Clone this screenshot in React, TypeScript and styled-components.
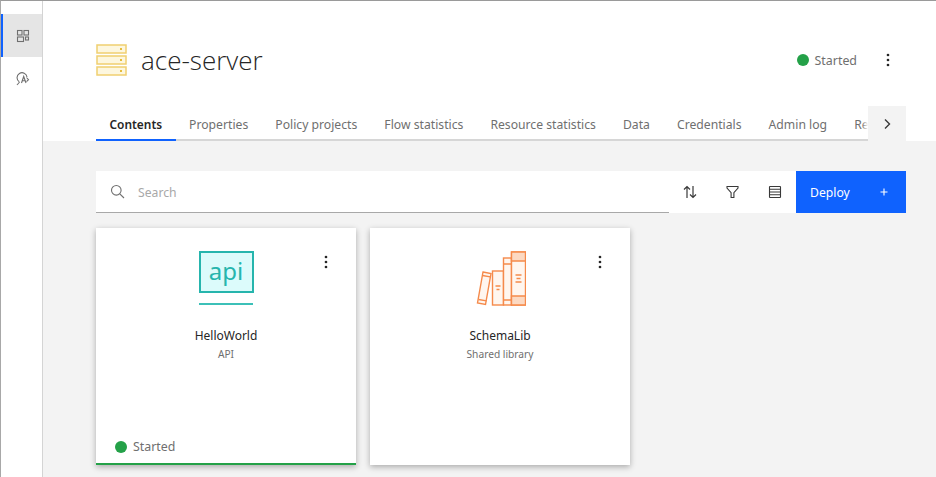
import styled, { createGlobalStyle } from 'styled-components'

const Global = createGlobalStyle`
html, body {
    margin: 0;
    padding: 0;
    height: 100%;
    overflow: hidden;
    background: #f3f3f3;
    font-family: "Noto Sans", "Liberation Sans", sans-serif;
}
`;

const Shell = styled.div`
    display: flex;
    width: 936px;
    height: 477px;
    box-sizing: border-box;
    border-top: 1px solid #9a9a9a;
    border-left: 1px solid #a8a8a8;
    overflow: hidden;
`;

const Sidebar = styled.nav`
    width: 41px;
    flex-shrink: 0;
    background: #fff;
    border-right: 1px solid #d4d4d4;
    padding-top: 13px;
    display: flex;
    flex-direction: column;
`;

const SideItem = styled.div<{ active?: boolean }>`
    height: 43px;
    display: flex;
    align-items: center;
    justify-content: center;
    box-sizing: border-box;
    background: ${({ active }) => active ? '#e5e5e5' : '#fff'};
    border-left: 2px solid ${({ active }) => active ? '#0f62fe' : 'transparent'};
    color: #6f6f6f;
`;

const Main = styled.main`
    flex: 1;
    min-width: 0;
    display: flex;
    flex-direction: column;
`;

const Header = styled.header`
    background: #fff;
    height: 140px;
    box-sizing: border-box;
    padding: 41px 30px 0 53px;
    display: flex;
    flex-direction: column;
`;

const TitleRow = styled.div`
    display: flex;
    align-items: center;
    height: 36px;
`;

const Title = styled.h1`
    margin: 0 0 0 13px;
    font-family: "Open Sans", "Noto Sans", sans-serif;
    font-size: 26px;
    font-weight: 300;
    color: #262626;
    flex: 1;
`;

const Status = styled.div`
    display: flex;
    align-items: center;
    gap: 6px;
    font-size: 12.4px;
    color: #6f6f6f;
`;

const Dot = styled.span`
    width: 12px;
    height: 12px;
    border-radius: 50%;
    background: #24a148;
`;

const HeaderMenu = styled.div`
    margin-left: 23px;
    margin-right: 10px;
    display: flex;
`;

const TabBar = styled.div`
    position: relative;
    margin-top: 29px;
    height: 35px;
`;

const TabList = styled.div`
    display: flex;
    width: 772px;
    height: 32px;
    border-bottom: 2px solid #d6d6d6;
`;

const Tab = styled.div<{ active?: boolean }>`
    flex-shrink: 0;
    padding: 2px 13.5px 0;
    height: 34px;
    box-sizing: border-box;
    display: flex;
    align-items: center;
    font-size: ${({ active }) => active ? '11.9px' : '12.2px'};
    font-weight: ${({ active }) => active ? 600 : 400};
    color: ${({ active }) => active ? '#262626' : '#6f6f6f'};
    border-bottom: 2px solid ${({ active }) => active ? '#0f62fe' : 'transparent'};
`;

const ScrollButton = styled.div`
    position: absolute;
    right: 0;
    top: -1px;
    width: 38px;
    height: 35px;
    background: #f3f3f3;
    display: flex;
    align-items: center;
    justify-content: center;
    color: #393939;

    &::before {
        content: '';
        position: absolute;
        left: -6px;
        top: 0;
        width: 6px;
        height: 33px;
        background: linear-gradient(to right, rgba(255, 255, 255, 0), #fff);
    }
`;

const Content = styled.div`
    padding: 30px 30px 0 53px;
`;

const Toolbar = styled.div`
    display: flex;
    height: 42px;
    background: #fff;
`;

const SearchBox = styled.div`
    flex: 1;
    display: flex;
    align-items: center;
    gap: 13px;
    padding-left: 14px;
    border-bottom: 1px solid #a8a8a8;
    color: #6f6f6f;
`;

const Placeholder = styled.span`
    font-size: 12.2px;
    padding-top: 2px;
    color: #a8a8a8;
`;

const ToolIcon = styled.div`
    width: 42.5px;
    display: flex;
    align-items: center;
    justify-content: center;
    color: #393939;
`;

const Deploy = styled.button`
    width: 110px;
    border: 0;
    background: #0f62fe;
    color: #fff;
    font-family: inherit;
    font-size: 12.2px;
    display: flex;
    align-items: center;
    justify-content: space-between;
    padding: 0 17px 0 14px;
`;

const Cards = styled.div`
    display: flex;
    gap: 14px;
    margin-top: 15px;
`;

const Card = styled.article<{ accent?: boolean }>`
    position: relative;
    width: 260px;
    height: 237px;
    box-sizing: border-box;
    background: #fff;
    box-shadow: 0 2px 6px rgba(0, 0, 0, 0.3);
    border-bottom: 2px solid ${({ accent }) => accent ? '#24a148' : 'transparent'};
    display: flex;
    flex-direction: column;
    align-items: center;
    padding-top: 22px;
`;

const CardMenu = styled.div`
    position: absolute;
    top: 26px;
    right: 22px;
    display: flex;
`;

const CardIcon = styled.div`
    height: 57px;
    display: flex;
    align-items: center;
    justify-content: center;
`;

const ApiBox = styled.div`
    width: 55px;
    height: 42px;
    box-sizing: border-box;
    border: 2px solid #26b5ad;
    background: #dcfbfb;
    color: #26b5ad;
    font-size: 24px;
    line-height: 35px;
    text-align: center;
`;

const ApiWrap = styled.div`
    display: flex;
    flex-direction: column;
    gap: 10px;
    margin-bottom: 2px;
`;

const ApiLine = styled.div`
    height: 2px;
    background: #3cc0b8;
    width: 54px;
`;

const CardName = styled.div`
    margin-top: 20px;
    font-size: 12px;
    color: #262626;
`;

const CardType = styled.div`
    margin-top: 3px;
    font-size: 10.2px;
    color: #6f6f6f;
`;

const CardStatus = styled(Status)`
    position: absolute;
    left: 19px;
    bottom: 8px;
`;

const Kebab = () => (
    <svg width="16" height="16" viewBox="0 0 16 16" fill="#262626">
        <circle cx="8" cy="3" r="1.35" />
        <circle cx="8" cy="8" r="1.35" />
        <circle cx="8" cy="13" r="1.35" />
    </svg>
);

const tabs = ['Contents', 'Properties', 'Policy projects', 'Flow statistics', 'Resource statistics', 'Data', 'Credentials', 'Admin log', 'Res'];

export default function App() {
    return (
        <>
            <Global />
            <Shell>
                <Sidebar>
                    <SideItem active>
                        <svg width="14" height="14" viewBox="0 0 14 14" fill="none" stroke="currentColor" strokeWidth="1.1">
                            <rect x="1.5" y="1.5" width="4.5" height="4.5" />
                            <rect x="8" y="1.5" width="4.5" height="4.5" />
                            <rect x="1.5" y="8" width="6" height="4.5" />
                            <rect x="9.5" y="8" width="3" height="3" />
                        </svg>
                    </SideItem>
                    <SideItem>
                        <svg width="14" height="14" viewBox="0 0 14 14" fill="none" stroke="currentColor" strokeWidth="1.1">
                            <path d="M3.2 9.8A5 5 0 1 1 11 5" />
                            <path d="M1 13l2.6-3" />
                            <path d="M5.5 11l2.2-6.5L10 11M6.4 8.8h2.6" />
                            <path d="M10.5 5.5l2 2.2-2 2" />
                        </svg>
                    </SideItem>
                </Sidebar>
                <Main>
                    <Header>
                        <TitleRow>
                            <svg width="32" height="32" viewBox="0 0 32 32" fill="#fdf7df" stroke="#f0cf70" strokeWidth="1.5">
                                <rect x="1" y="1" width="29" height="8" />
                                <rect x="1" y="12" width="29" height="8" />
                                <rect x="1" y="23" width="29" height="8" />
                                <rect x="24" y="4" width="2" height="2" fill="#e6bc3c" stroke="none" />
                                <rect x="24" y="15" width="2" height="2" fill="#e6bc3c" stroke="none" />
                                <rect x="24" y="26" width="2" height="2" fill="#e6bc3c" stroke="none" />
                            </svg>
                            <Title>ace-server</Title>
                            <Status><Dot />Started</Status>
                            <HeaderMenu><Kebab /></HeaderMenu>
                        </TitleRow>
                        <TabBar>
                            <TabList>
                                {tabs.map((t, i) => <Tab key={t} active={i === 0}>{t}</Tab>)}
                            </TabList>
                            <ScrollButton>
                                <svg width="14" height="14" viewBox="0 0 14 14" fill="none" stroke="currentColor" strokeWidth="1.4">
                                    <path d="M5 2.5L9.5 7 5 11.5" />
                                </svg>
                            </ScrollButton>
                        </TabBar>
                    </Header>
                    <Content>
                        <Toolbar>
                            <SearchBox>
                                <svg width="15" height="15" viewBox="0 0 15 15" fill="none" stroke="currentColor" strokeWidth="1.1">
                                    <circle cx="6.3" cy="6.3" r="4.8" />
                                    <path d="M9.8 9.8L14 14" />
                                </svg>
                                <Placeholder>Search</Placeholder>
                            </SearchBox>
                            <ToolIcon>
                                <svg width="14" height="14" viewBox="0 0 14 14" fill="none" stroke="currentColor" strokeWidth="1.2">
                                    <path d="M4 13V1.5M1 4.5l3-3 3 3" />
                                    <path d="M10 1v11.5M7 9.5l3 3 3-3" />
                                </svg>
                            </ToolIcon>
                            <ToolIcon>
                                <svg width="14" height="14" viewBox="0 0 14 14" fill="none" stroke="currentColor" strokeWidth="1.1">
                                    <path d="M2 1.5h11v1.6L8.9 7.6v4.9H6.1V7.6L2 3.1z" />
                                </svg>
                            </ToolIcon>
                            <ToolIcon>
                                <svg width="14" height="14" viewBox="0 0 14 14" fill="none" stroke="currentColor" strokeWidth="1.1">
                                    <rect x="1.5" y="1.5" width="11" height="11" rx="0.5" />
                                    <path d="M1.5 4.3h11M1.5 7h11M1.5 9.7h11" />
                                </svg>
                            </ToolIcon>
                            <Deploy>
                                <span>Deploy</span>
                                <svg width="10" height="10" viewBox="0 0 10 10" stroke="currentColor" strokeWidth="1.1">
                                    <path d="M5 1.5v7M1.5 5h7" />
                                </svg>
                            </Deploy>
                        </Toolbar>
                        <Cards>
                            <Card accent>
                                <CardMenu><Kebab /></CardMenu>
                                <CardIcon>
                                    <ApiWrap>
                                        <ApiBox>api</ApiBox>
                                        <ApiLine />
                                    </ApiWrap>
                                </CardIcon>
                                <CardName>HelloWorld</CardName>
                                <CardType>API</CardType>
                                <CardStatus><Dot />Started</CardStatus>
                            </Card>
                            <Card>
                                <CardMenu><Kebab /></CardMenu>
                                <CardIcon>
                                    <svg width="52" height="56" viewBox="-3 0 52 56" fill="#fff6ef" stroke="#f58a4b" strokeWidth="1.4">
                                        <path d="M6 21l8 1.5-5.5 31-8-1.5z" />
                                        <path d="M5.4 24.5l8 1.4M1.6 48.5l8 1.4" />
                                        <rect x="15.5" y="20" width="11" height="34" />
                                        <rect x="26.5" y="7" width="8" height="47" />
                                        <path d="M26.5 13h8M26.5 49h8" />
                                        <rect x="34.5" y="1" width="14" height="53" />
                                        <path d="M34.5 1h14v9h-14zM34.5 45h14v9h-14z" fill="#fcd9c2" />
                                        <path d="M18.5 35h5M19.5 38.5h3M38.5 24h6M39.5 27.5h4M38.5 31h6" />
                                    </svg>
                                </CardIcon>
                                <CardName>SchemaLib</CardName>
                                <CardType>Shared library</CardType>
                            </Card>
                        </Cards>
                    </Content>
                </Main>
            </Shell>
        </>
    )
}
